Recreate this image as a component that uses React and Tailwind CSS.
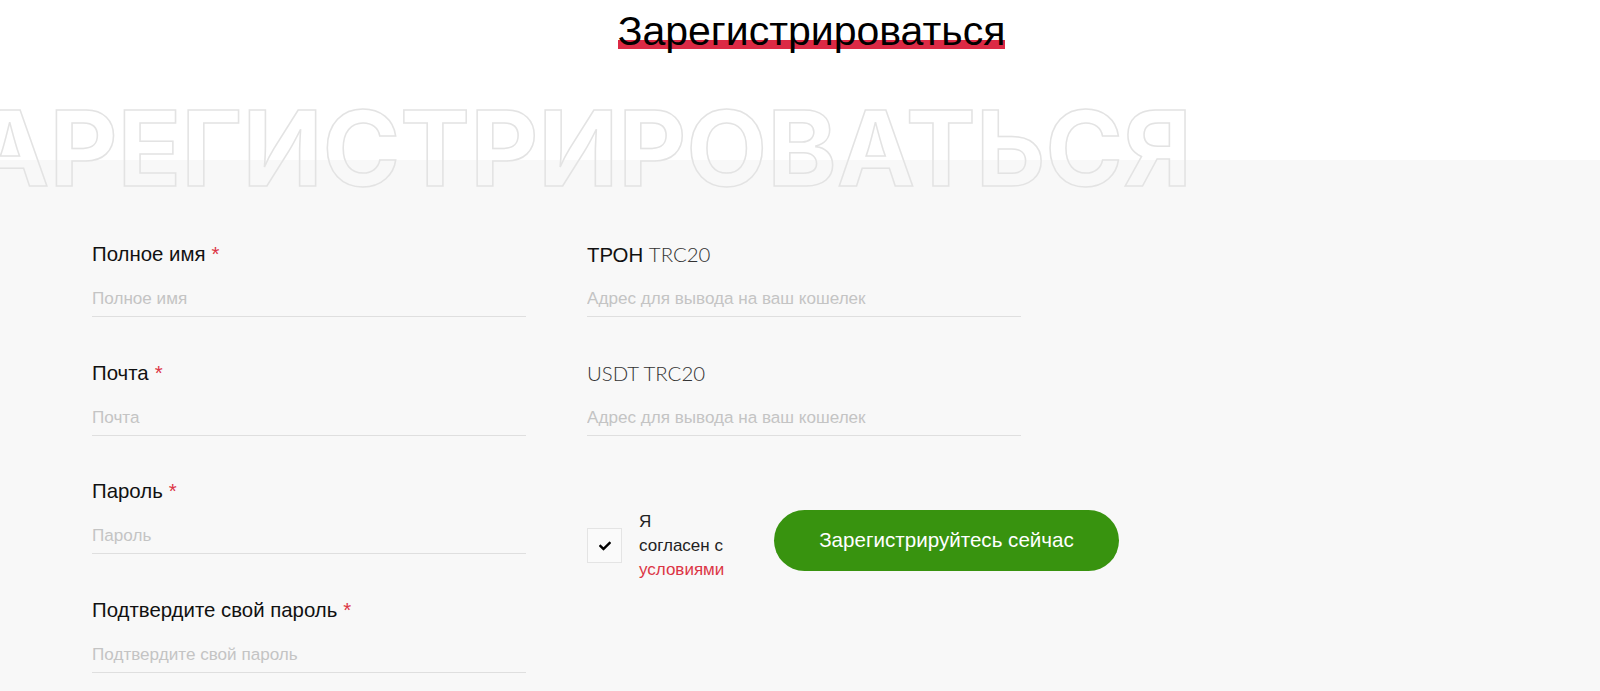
import { FaCheck } from 'react-icons/fa';

function Field({ label, placeholder, required, children }) {
  return (
    <div className="h-[118.5px]">
      <label className="block h-[24px] text-[20.4px] leading-[24px] text-[#111]">
        {children || label}
        {required && <span className="text-[#dc3545] ml-[6px]">*</span>}
      </label>
      <input
        placeholder={placeholder}
        className="block mt-[20px] w-full h-[31px] pb-[4px] bg-transparent border-b border-[#dfdfdf] text-[17.1px] outline-none placeholder:text-[#c4c4c4]"
      />
    </div>
  );
}

export default function App() {
  return (
    <div className="relative h-[691px] overflow-hidden bg-white font-['Liberation_Sans',Arial,sans-serif]">
      <div className="h-[160px] flex justify-center pl-[23px] pt-[8px]">
        <h1 className="relative h-[42px] text-[41px] leading-[46px] font-normal text-black whitespace-nowrap">
          <span className="absolute left-0 right-0 top-[32px] h-[9px] bg-[#dc2a45]"></span>
          <span className="relative">Зарегистрироваться</span>
        </h1>
      </div>

      <div className="absolute top-[88px] right-[408px] whitespace-nowrap font-['Inter',sans-serif] font-bold text-[105px] leading-[120px] text-transparent z-10 pointer-events-none [-webkit-text-stroke:1.5px_#e3e3e3]">
        ЗАРЕГИСТРИРОВАТЬСЯ
      </div>

      <div className="bg-[#f8f8f8] h-[531px] pl-[92px] pt-[82px]">
        <div className="grid grid-cols-[434px_434px] gap-x-[61px]">
          <div>
            <Field label="Полное имя" placeholder="Полное имя" required />
            <Field label="Почта" placeholder="Почта" required />
            <Field label="Пароль" placeholder="Пароль" required />
            <Field label="Подтвердите свой пароль" placeholder="Подтвердите свой пароль" required />
          </div>
          <div>
            <Field placeholder="Адрес для вывода на ваш кошелек">
              ТРОН <span className="font-['Lato',sans-serif] font-light text-[#333]">TRC20</span>
            </Field>
            <Field placeholder="Адрес для вывода на ваш кошелек">
              <span className="font-['Lato',sans-serif] font-light text-[#333]">USDT TRC20</span>
            </Field>
            <div className="flex items-start mt-[31px]">
              <div className="flex items-center justify-center shrink-0 w-[35px] h-[35px] mt-[18px] border border-[#e4e4e4] bg-[#fafafa]">
                <FaCheck className="text-[12px] text-black" />
              </div>
              <div className="shrink-0 w-[100px] ml-[17px] text-[17px] leading-[24px] text-[#222]">
                <div>Я</div>
                <div>согласен с</div>
                <div className="text-[#dc3545]">условиями</div>
              </div>
              <button className="shrink-0 ml-[35px] w-[345px] h-[61px] rounded-full bg-[#38930f] text-white text-[20.6px]">
                Зарегистрируйтесь сейчас
              </button>
            </div>
          </div>
        </div>
      </div>
    </div>
  );
}
